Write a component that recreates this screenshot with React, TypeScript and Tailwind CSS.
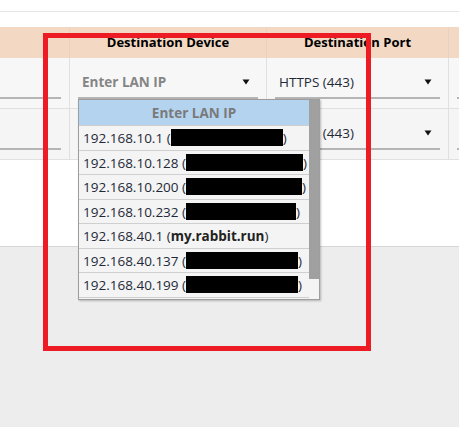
import React from "react";

interface LanOption {
  ip: string;
  hidden?: number;
  name?: string;
}

const lanOptions: LanOption[] = [
  { ip: "192.168.10.1", hidden: 112 },
  { ip: "192.168.10.128", hidden: 117 },
  { ip: "192.168.10.200", hidden: 116 },
  { ip: "192.168.10.232", hidden: 110 },
  { ip: "192.168.40.1", name: "my.rabbit.run" },
  { ip: "192.168.40.137", hidden: 112 },
  { ip: "192.168.40.199", hidden: 112 },
];

const Caret = () => (
  <svg width="8" height="6" viewBox="0 0 8 6" className="shrink-0">
    <path d="M0.5 0.5 H7.5 L4 5.5 Z" fill="#111" />
  </svg>
);

const SelectBox: React.FC<{ value: string; placeholder?: boolean }> = ({
  value,
  placeholder,
}) => (
  <div className="flex h-[32px] w-full items-center justify-between border-b-2 border-[#b5b5b5] pl-1 pr-2">
    <span
      className={
        placeholder
          ? "pt-[2px] font-bold text-[#858585]"
          : "pt-[2px] text-[#1e2a38]"
      }
    >
      {value}
    </span>
    <Caret />
  </div>
);

const TableRow: React.FC<{ bg: string }> = ({ bg }) => (
  <div className={`flex h-[51px] border-b border-[#e0e0e0] ${bg}`}>
    {/* partial first column */}
    <div className="flex w-[70px] shrink-0 items-center border-r border-[#e0e0e0] pr-2">
      <div className="h-[32px] w-full border-b-2 border-[#b5b5b5]" />
    </div>
    <div className="flex w-[197px] shrink-0 items-center border-r border-[#e0e0e0] px-2">
      <SelectBox value="Enter LAN IP" placeholder />
    </div>
    <div className="flex w-[182px] shrink-0 items-center border-r border-[#e0e0e0] px-2">
      <SelectBox value="HTTPS (443)" />
    </div>
    <div className="flex flex-1 items-center pl-2">
      <div className="h-[32px] w-full border-b-2 border-[#b5b5b5]" />
    </div>
  </div>
);

const LanDropdown = () => (
  <div className="absolute left-[78px] top-[99px] flex h-[201px] w-[242px] overflow-hidden border border-[#9d9d9d] bg-[#f4f4f4] shadow-[1px_1px_2px_rgba(0,0,0,0.25)]">
    <div className="flex flex-1 flex-col">
      <div className="flex h-[25px] shrink-0 items-center justify-center bg-[#b3d3ef] pt-[2px] font-bold text-[#7a7a7a]">
        Enter LAN IP
      </div>
      {lanOptions.map((opt) => (
        <div
          key={opt.ip}
          className="flex h-[24.5px] shrink-0 items-center border-t border-[#cfcfcf] pl-[4px] pt-[2px] text-[#1e2a38]"
        >
          <span>{opt.ip}&nbsp;(</span>
          {opt.name ? (
            <span className="font-bold text-[#222]">{opt.name}</span>
          ) : (
            <span
              className="mb-[2px] inline-block h-[17px] bg-black"
              style={{ width: opt.hidden }}
            />
          )}
          <span>)</span>
        </div>
      ))}
      <div className="border-t border-[#cfcfcf]" />
    </div>
    <div className="w-[10px] shrink-0">
      <div className="h-[179px] bg-[#a0a0a0]" />
    </div>
  </div>
);

export default function App() {
  return (
    <div
      className="relative h-[427px] w-[459px] overflow-hidden bg-[#ededed] text-[13.5px] leading-none"
      style={{ fontFamily: '"Open Sans", "Noto Sans", sans-serif' }}
    >
      <div className="h-[247px] border-b border-[#d6d6d6] bg-white">
        <div className="h-[12px] border-b border-[#e6e6e6]" />
        <div className="h-[15px]" />

        {/* header */}
        <div className="flex h-[31px] bg-[#f3d9c4] text-[13px] font-bold text-black">
          <div className="w-[70px] shrink-0 border-r border-[#e6d2c2]" />
          <div className="flex w-[197px] shrink-0 items-center justify-center border-r border-[#e6d2c2]">
            Destination Device
          </div>
          <div className="flex w-[182px] shrink-0 items-center justify-center border-r border-[#e6d2c2]">
            Destination Port
          </div>
          <div className="flex-1" />
        </div>

        <TableRow bg="bg-[#f7f7f7]" />
        <TableRow bg="bg-[#f5f5f5]" />
      </div>

      <LanDropdown />

      {/* highlight box */}
      <div className="pointer-events-none absolute left-[43px] top-[33px] h-[318px] w-[328px] border-[5px] border-[#ed1c24]" />
    </div>
  );
}
